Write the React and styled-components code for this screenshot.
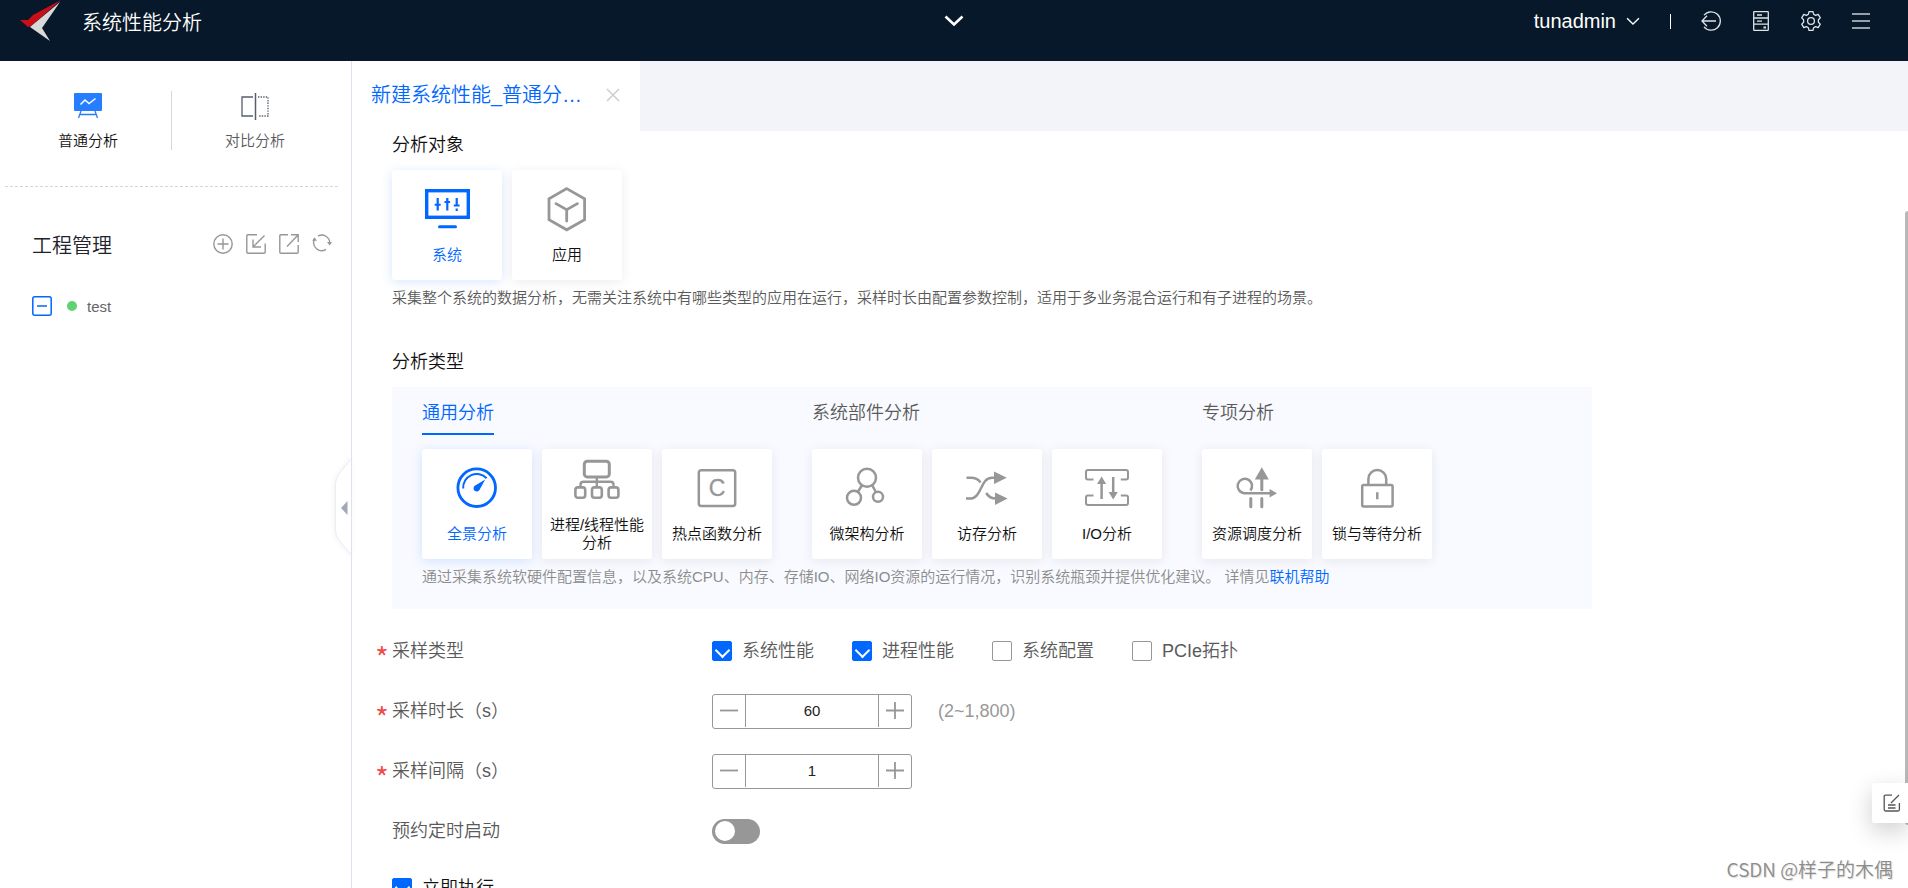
import React, { useState } from 'react'
import styled, { createGlobalStyle } from 'styled-components'

const blue = '#0067ff'
const grey = '#979797'
const fontStack = '"Liberation Sans", "Noto Sans CJK SC", sans-serif'

/* ---------- icons ---------- */

const Logo = () => (
  <svg width="42" height="42" viewBox="0 0 42 42">
    <path d="M41 0 L13 15 L8 20 L0 20 L8 27 L11 26 Z" fill="#cb0f19" />
    <path d="M40 2 L10 27 L30 41 L22 28 Z" fill="#d9d9d9" />
  </svg>
)

const ChevronDown = ({ width, height, stroke }) => (
  <svg width={width} height={height} viewBox="0 0 20 12" fill="none" stroke="#fff" strokeWidth={stroke}>
    <path d="M1.5 1.5 L10 9.5 L18.5 1.5" />
  </svg>
)

const LogoutIcon = () => (
  <svg width="20" height="20" viewBox="0 0 20 20" fill="none" stroke="#dfe3e8" strokeWidth="1.3">
    <path d="M3 4.2 A9.2 9.2 0 1 1 3 15.8" />
    <path d="M6 4.8 L1 10 L6 15.2 M1 10 H15" />
  </svg>
)

const ServerIcon = () => (
  <svg width="20" height="20" viewBox="0 0 20 20" fill="none" stroke="#dfe3e8" strokeWidth="1.3">
    <rect x="2.7" y="0.7" width="14.6" height="18.6" rx="0.6" />
    <path d="M2.7 7 H17.3 M2.7 13.2 H17.3 M6 4 H11 M6 10.2 H11" />
    <path d="M12.5 16.5 H15" strokeWidth="2" />
  </svg>
)

const GearIcon = () => (
  <svg width="20" height="20" viewBox="0 0 20 20" fill="none" stroke="#dfe3e8" strokeWidth="1.3" strokeLinejoin="round">
    <path d="M8 0.7 H12 L12.6 3.2 L14.6 4.4 L17.2 3.4 L19.3 6.9 L17.4 8.8 V11.2 L19.3 13.1 L17.2 16.6 L14.6 15.6 L12.6 16.8 L12 19.3 H8 L7.4 16.8 L5.4 15.6 L2.8 16.6 L0.7 13.1 L2.6 11.2 V8.8 L0.7 6.9 L2.8 3.4 L5.4 4.4 L7.4 3.2 Z" />
    <circle cx="10" cy="10" r="3.4" />
  </svg>
)

const MenuIcon = () => (
  <svg width="20" height="20" viewBox="0 0 20 20" stroke="#c8ccd2" strokeWidth="1.5">
    <path d="M1 3 H19 M1 10 H19 M1 17 H19" />
  </svg>
)

const BoardIcon = () => (
  <svg width="28" height="26" viewBox="0 0 28 26" fill="none">
    <rect x="0" y="0" width="28" height="18" rx="1" fill="#267dff" />
    <path d="M6.5 11.5 L11 7 L15 10.5 L21.5 5.5" stroke="#fff" strokeWidth="1.5" />
    <path d="M7 18 L4.5 25 M21 18 L23.5 25 M6 21.5 H22" stroke="#267dff" strokeWidth="1.3" />
  </svg>
)

const CompareIcon = () => (
  <svg width="28" height="27" viewBox="0 0 28 27" fill="none" stroke="#575d6c" strokeWidth="1.3">
    <path d="M12 4 H1 V23 H12" />
    <path d="M14.5 0 V27" strokeWidth="1.5" />
    <path d="M17 4 H27 V23 H17" strokeDasharray="1.4 1.2" />
  </svg>
)

const AddIcon = () => (
  <svg width="20" height="20" viewBox="0 0 20 20" fill="none" stroke={grey} strokeWidth="1.4">
    <circle cx="10" cy="10" r="9.2" />
    <path d="M10 4.5 V15.5 M4.5 10 H15.5" />
  </svg>
)

const ImportIcon = () => (
  <svg width="20" height="20" viewBox="0 0 20 20" fill="none" stroke={grey} strokeWidth="1.4">
    <path d="M11 0.8 H2 Q0.8 0.8 0.8 2 V18 Q0.8 19.2 2 19.2 H18 Q19.2 19.2 19.2 18 V9.5" />
    <path d="M18.5 1.5 L7 13 M7 5.5 V13 H15" />
  </svg>
)

const ExportIcon = () => (
  <svg width="20" height="20" viewBox="0 0 20 20" fill="none" stroke={grey} strokeWidth="1.4">
    <path d="M9 0.8 H2 Q0.8 0.8 0.8 2 V18 Q0.8 19.2 2 19.2 H18 Q19.2 19.2 19.2 18 V11" />
    <path d="M8 12.5 L19 1 M12 0.8 H19.2 V8" />
  </svg>
)

const RefreshIcon = () => (
  <svg width="20" height="20" viewBox="0 0 20 20" fill="none" stroke={grey} strokeWidth="1.4">
    <path d="M6 2.1 A8 8 0 0 1 17.8 9 M2.3 5.5 A8 8 0 0 0 14 15.3" />
    <path d="M15 8 H20 L17.6 11.6 Z M0.2 6.8 H5 L2.4 3.2 Z" fill={grey} stroke="none" />
  </svg>
)

const CollapseIcon = () => (
  <svg width="20" height="20" viewBox="0 0 20 20" fill="none" stroke={blue} strokeWidth="1.5">
    <rect x="0.8" y="0.8" width="18.4" height="18.4" rx="2" />
    <path d="M5 10 H15" />
  </svg>
)

const CloseIcon = () => (
  <svg width="14" height="14" viewBox="0 0 14 14" stroke="#d0d0d0" strokeWidth="1.7">
    <path d="M1 1 L13 13 M13 1 L1 13" />
  </svg>
)

const NoteIcon = () => (
  <svg width="18" height="18" viewBox="0 0 18 18" fill="none" stroke="#555" strokeWidth="1.3">
    <path d="M9 1.2 H2.5 Q1.2 1.2 1.2 2.5 V15.5 Q1.2 17 2.5 17 H15 Q16.4 17 16.4 15.5 V9" />
    <path d="M8 9 L16 1 M5 11 H12.5 M5 14 H12.5" />
  </svg>
)

const HandleShape = () => (
  <svg width="17" height="100" viewBox="0 0 17 100">
    <path d="M17 1 L4 17 Q0.5 22 0.5 27 V73 Q0.5 78 4 83 L17 99" fill="#fff" stroke="#ececf1" />
    <path d="M12.5 44 V58 L6 51 Z" fill="#a3a8b8" />
    <path d="M16.5 0 V100" stroke="#dfe1ee" />
  </svg>
)

const CardSvg = ({ children }) => (
  <svg width="46" height="46" viewBox="0 0 46 46" fill="none" stroke="currentColor" strokeWidth="2.5">
    {children}
  </svg>
)

const icons = {
  system: (
    <CardSvg>
      <rect x="2.7" y="4.7" width="41.6" height="26.6" strokeWidth="3.4" />
      <path d="M15.5 40.7 H31.5" strokeWidth="3" strokeLinecap="round" />
      <path d="M13.7 12 V24.5 M23.3 12 V24.5 M32.7 12 V20 M32.7 22.5 V25" strokeWidth="2.2" />
      <path d="M10.7 18.7 H16.7 M20.5 16 H26.1 M29.8 19.5 H35.6" strokeWidth="2" />
    </CardSvg>
  ),
  app: (
    <CardSvg>
      <path d="M22.7 2.6 L40.6 12.8 V33.8 L22.7 43.8 L5 33.8 V12.8 Z" strokeWidth="2.8" />
      <path d="M12 17.6 L22.7 23.6 L33.4 17.6 M22.7 23.6 V35" strokeWidth="2.8" strokeLinecap="round" />
    </CardSvg>
  ),
  gauge: (
    <CardSvg>
      <circle cx="22.7" cy="22.7" r="18.8" strokeWidth="2.8" />
      <path d="M9.2 23.5 A13.6 13.6 0 0 1 32.6 13.2" strokeWidth="2" />
      <path d="M31.2 14.6 L25.6 24.8 A3.2 3.2 0 1 1 20.8 20.8 Z" fill="currentColor" stroke="none" />
    </CardSvg>
  ),
  process: (
    <CardSvg>
      <rect x="10.3" y="5.3" width="25" height="15.6" rx="3" strokeWidth="3" />
      <path d="M22.8 21 V30 M6.5 31 V28.5 Q6.5 25.8 9.5 25.8 H36.5 Q39.5 25.8 39.5 28.5 V31" strokeWidth="2.4" />
      <rect x="1.4" y="31.4" width="9.8" height="10.4" rx="2.5" strokeWidth="2.6" />
      <rect x="18" y="31.4" width="9.8" height="10.4" rx="2.5" strokeWidth="2.6" />
      <rect x="34.6" y="31.4" width="9.8" height="10.4" rx="2.5" strokeWidth="2.6" />
    </CardSvg>
  ),
  hotspot: (
    <CardSvg>
      <rect x="4.8" y="5.2" width="36.4" height="35.8" rx="2.5" />
      <text x="23" y="31" textAnchor="middle" fontFamily="Liberation Sans" fontSize="23" fill="currentColor" strokeWidth="0.3">C</text>
    </CardSvg>
  ),
  micro: (
    <CardSvg>
      <circle cx="23" cy="12.8" r="9" />
      <circle cx="10" cy="32.8" r="7" />
      <circle cx="34" cy="31.8" r="5" />
      <path d="M17.8 20.5 L13.8 27 M28.4 20.5 L31.8 27" />
    </CardSvg>
  ),
  memory: (
    <CardSvg>
      <path d="M2 33.6 H6 C18 33.6 16 12.8 28 12.8 H31" />
      <path d="M2.5 12.8 H7 Q13 12.8 16.6 17.4 M22.2 28 Q25.5 33.6 32 33.6" />
      <path d="M30 6.6 L42.8 12.8 L30 19 Z M31 27.4 L43.6 33.6 L31 40 Z" fill="currentColor" stroke="none" />
    </CardSvg>
  ),
  io: (
    <CardSvg>
      <path d="M9.5 14.4 H4 Q2 14.4 2 12.5 V7 Q2 5 4 5 H42 Q44 5 44 7 V12.5 Q44 14.4 42 14.4 H36.8" strokeWidth="2" />
      <path d="M9.5 30.4 H4 Q2 30.4 2 32.3 V38 Q2 40 4 40 H42 Q44 40 44 38 V32.3 Q44 30.4 42 30.4 H36.8" strokeWidth="2" />
      <path d="M17.6 17 V34 M29.2 12 V29" />
      <path d="M13 19 L17.6 11.4 L22.2 19 Z M24.6 27 L29.2 34.4 L33.8 27 Z" fill="currentColor" stroke="none" />
    </CardSvg>
  ),
  schedule: (
    <CardSvg>
      <path d="M16.4 25.6 A7.2 7.2 0 1 0 10.2 28.2 H36" />
      <path d="M27.8 13 V24.8 M27.8 33.5 V41.7 M16.8 33.5 V41.7" strokeWidth="3" strokeLinecap="round" />
      <path d="M20.8 14.4 L27.8 2.2 L34.8 14.4 Z M35.6 24 L43 28.2 L35.6 32.4 Z" fill="currentColor" stroke="none" />
    </CardSvg>
  ),
  lock: (
    <CardSvg>
      <rect x="8.2" y="19.9" width="30.4" height="21.6" rx="1.5" />
      <path d="M14.4 19.5 V14 A8.9 8.9 0 0 1 32.2 14 V19.5 M23.3 27.2 V34.2" />
    </CardSvg>
  )
}

/* ---------- data ---------- */

const targets = [
  { id: 'system', label: '系统' },
  { id: 'app', label: '应用' }
]

const groups = [
  {
    title: '通用分析',
    items: [
      { id: 'gauge', label: '全景分析' },
      { id: 'process', label: '进程/线程性能分析' },
      { id: 'hotspot', label: '热点函数分析' }
    ]
  },
  {
    title: '系统部件分析',
    items: [
      { id: 'micro', label: '微架构分析' },
      { id: 'memory', label: '访存分析' },
      { id: 'io', label: 'I/O分析' }
    ]
  },
  {
    title: '专项分析',
    items: [
      { id: 'schedule', label: '资源调度分析' },
      { id: 'lock', label: '锁与等待分析' }
    ]
  }
]

const sampleTypes = [
  { label: '系统性能', on: true },
  { label: '进程性能', on: true },
  { label: '系统配置', on: false },
  { label: 'PCIe拓扑', on: false }
]

/* ---------- parts ---------- */

const CardList = ({ items, active, onPick }) => (
  <Cards>
    {items.map(item => (
      <Card key={item.id} type="button" $active={item.id === active} aria-pressed={item.id === active} onClick={() => onPick(item.id)}>
        <CardIcon>{icons[item.id]}</CardIcon>
        {item.label}
      </Card>
    ))}
  </Cards>
)

const NumberField = ({ id, initial }) => {
  const [value, setValue] = useState(initial)

  return (
    <Stepper>
      <StepButton type="button" aria-label="减少" onClick={() => setValue(Number(value) - 1)}>
        <svg width="18" height="18" viewBox="0 0 18 18" stroke={grey} strokeWidth="1.8"><path d="M0 8.5 H18" /></svg>
      </StepButton>
      <StepInput id={id} value={value} onChange={e => setValue(e.target.value)} />
      <StepButton type="button" aria-label="增加" onClick={() => setValue(Number(value) + 1)}>
        <svg width="18" height="18" viewBox="0 0 18 18" stroke={grey} strokeWidth="1.8"><path d="M0 8.5 H18 M9 0 V17" /></svg>
      </StepButton>
    </Stepper>
  )
}

const App = () => {
  const [target, setTarget] = useState('system')
  const [type, setType] = useState('gauge')

  return (
    <Page>
      <GlobalStyle />
      <Header>
        <Brand>
          <Logo />
          <BrandTitle>系统性能分析</BrandTitle>
        </Brand>
        <IconButton aria-label="展开"><ChevronDown width={20} height={12} stroke={2.6} /></IconButton>
        <HeaderTools>
          <UserButton type="button">tunadmin <ChevronDown width={14} height={9} stroke={2} /></UserButton>
          <HeaderDivider />
          <IconButton aria-label="退出"><LogoutIcon /></IconButton>
          <IconButton aria-label="服务器"><ServerIcon /></IconButton>
          <IconButton aria-label="设置"><GearIcon /></IconButton>
          <IconButton aria-label="菜单"><MenuIcon /></IconButton>
        </HeaderTools>
      </Header>

      <Body>
        <Sidebar>
          <Modes>
            <Mode type="button" $active><ModeIcon><BoardIcon /></ModeIcon>普通分析</Mode>
            <ModeDivider />
            <Mode type="button"><ModeIcon><CompareIcon /></ModeIcon>对比分析</Mode>
          </Modes>
          <ProjectHead>
            <ProjectTitle>工程管理</ProjectTitle>
            <ProjectTools>
              <IconButton aria-label="新建"><AddIcon /></IconButton>
              <IconButton aria-label="导入"><ImportIcon /></IconButton>
              <IconButton aria-label="导出"><ExportIcon /></IconButton>
              <IconButton aria-label="刷新"><RefreshIcon /></IconButton>
            </ProjectTools>
          </ProjectHead>
          <Project>
            <IconButton aria-label="收起工程"><CollapseIcon /></IconButton>
            <StatusDot />
            test
          </Project>
          <Handle type="button" aria-label="收起侧栏"><HandleShape /></Handle>
        </Sidebar>

        <Main>
          <TabBar>
            <Tab>
              <TabName>新建系统性能_普通分…</TabName>
              <IconButton aria-label="关闭"><CloseIcon /></IconButton>
            </Tab>
          </TabBar>

          <Content>
            <SectionTitle>分析对象</SectionTitle>
            <CardList items={targets} active={target} onPick={setTarget} />
            <Hint>采集整个系统的数据分析，无需关注系统中有哪些类型的应用在运行，采样时长由配置参数控制，适用于多业务混合运行和有子进程的场景。</Hint>

            <SectionTitle $spaced>分析类型</SectionTitle>
            <TypePanel>
              <Groups>
                {groups.map((group, i) => (
                  <div key={group.title}>
                    <GroupTitle $active={i === 0}>{group.title}</GroupTitle>
                    <CardList items={group.items} active={type} onPick={setType} />
                  </div>
                ))}
              </Groups>
              <Hint $light>
                通过采集系统软硬件配置信息，以及系统CPU、内存、存储IO、网络IO资源的运行情况，识别系统瓶颈并提供优化建议。 详情见<HelpLink href="#help">联机帮助</HelpLink>
              </Hint>
            </TypePanel>

            <Form>
              <Row>
                <RowLabel as="span" $required>采样类型</RowLabel>
                {sampleTypes.map(item => (
                  <CheckLabel key={item.label}>
                    <Checkbox type="checkbox" defaultChecked={item.on} />
                    {item.label}
                  </CheckLabel>
                ))}
              </Row>
              <Row>
                <RowLabel htmlFor="duration" $required>采样时长（s）</RowLabel>
                <NumberField id="duration" initial="60" />
                <Range>(2~1,800)</Range>
              </Row>
              <Row>
                <RowLabel htmlFor="interval" $required>采样间隔（s）</RowLabel>
                <NumberField id="interval" initial="1" />
              </Row>
              <Row>
                <RowLabel htmlFor="schedule">预约定时启动</RowLabel>
                <Switch id="schedule" type="checkbox" role="switch" />
              </Row>
              <Row $last>
                <CheckLabel $dark>
                  <Checkbox type="checkbox" defaultChecked />
                  立即执行
                </CheckLabel>
              </Row>
            </Form>
          </Content>
          <ScrollThumb />
        </Main>
      </Body>

      <NoteButton type="button" aria-label="反馈"><NoteIcon /></NoteButton>
      <Watermark>CSDN @样子的木偶</Watermark>
    </Page>
  )
}

/* ---------- styles ---------- */

const GlobalStyle = createGlobalStyle`
  * {
    box-sizing: border-box;
  }
  body {
    margin: 0;
    background: #fff;
    color: #111;
    font-family: ${fontStack};
    font-size: 15px;
    font-weight: 350;
  }
  button, input {
    font: inherit;
    color: inherit;
  }
  button {
    padding: 0;
    border: 0;
    background: none;
    cursor: pointer;
  }
  svg {
    display: block;
    flex: none;
  }
`

const Page = styled.div`
  position: relative;
  display: flex;
  flex-direction: column;
  height: 100vh;
  overflow: hidden;
`

const Header = styled.header`
  flex: none;
  display: grid;
  grid-template-columns: 1fr auto 1fr;
  align-items: center;
  padding: 0 20px 19px;
  height: 61px;
  background: #061829;
  color: #fff;
`

const Brand = styled.div`
  display: flex;
  align-items: center;
  gap: 20px;
`

const BrandTitle = styled.h1`
  margin: 4px 0 0;
  font-size: 20px;
  font-weight: inherit;
  line-height: 38px;
`

const HeaderTools = styled.div`
  display: flex;
  align-items: center;
  justify-content: flex-end;
  gap: 30px;
  padding-right: 17px;
`

const UserButton = styled.button`
  display: flex;
  align-items: center;
  gap: 10px;
  font-size: 20px;
`

const HeaderDivider = styled.span`
  width: 1px;
  height: 15px;
  background: #fff;
`

const IconButton = styled.button.attrs({ type: 'button' })`
  flex: none;
  display: flex;
`

const Body = styled.div`
  flex: 1;
  min-height: 0;
  display: grid;
  grid-template-columns: 352px minmax(0, 1fr);
`

const Sidebar = styled.aside`
  position: relative;
  padding: 0 13px 0 5px;
  border-right: 1px solid #dfe1ee;
`

const Modes = styled.div`
  display: grid;
  grid-template-columns: 1fr 1px 1fr;
  padding: 30px 0 36px;
  border-bottom: 1px dashed #d3d5df;
`

const Mode = styled.button`
  display: flex;
  flex-direction: column;
  align-items: center;
  justify-content: space-between;
  color: ${p => (p.$active ? '#111' : '#5a5a5a')};
  line-height: 18px;
`

const ModeIcon = styled.span`
  display: flex;
  align-items: center;
  height: 30px;
`

const ModeDivider = styled.span`
  height: 59px;
  background: #d3d5df;
`

const ProjectHead = styled.div`
  display: flex;
  align-items: center;
  justify-content: space-between;
  height: 30px;
  margin-top: 42px;
  padding: 0 6px 0 27px;
`

const ProjectTitle = styled.h2`
  margin: 0;
  color: #20232b;
  font-size: 20px;
  font-weight: inherit;
`

const ProjectTools = styled.div`
  display: flex;
  gap: 13px;
`

const Project = styled.div`
  display: flex;
  align-items: center;
  height: 30px;
  margin-top: 32px;
  padding-left: 27px;
  color: #666;
`

const StatusDot = styled.span`
  width: 10px;
  height: 10px;
  margin: 0 10px 0 15px;
  border-radius: 50%;
  background: #5fd373;
`

const Handle = styled.button`
  position: absolute;
  top: 396px;
  right: -1px;
  filter: drop-shadow(-1px 0 2px rgba(0, 0, 0, 0.05));
`

const Main = styled.main`
  position: relative;
  min-width: 0;
  overflow: hidden;
`

const TabBar = styled.div`
  display: flex;
  height: 70px;
  background: #f3f4f9;
`

const Tab = styled.div`
  display: flex;
  align-items: center;
  justify-content: space-between;
  width: 288px;
  padding: 0 20px 2px 19px;
  background: #fff;
`

const TabName = styled.span`
  color: ${blue};
  font-size: 20px;
  line-height: 30px;
  white-space: nowrap;
`

const Content = styled.div`
  padding: 0 40px;
`

const SectionTitle = styled.h3`
  margin: ${p => (p.$spaced ? '40px' : '0')} 0 11px;
  font-size: 18px;
  font-weight: inherit;
  line-height: 28px;
`

const Cards = styled.div`
  display: flex;
  gap: 10px;
`

const Card = styled.button`
  display: flex;
  flex-direction: column;
  align-items: center;
  justify-content: center;
  width: 110px;
  height: 110px;
  padding: 0 5px;
  border-radius: 3px;
  background: #fff;
  box-shadow: 0 2px 12px ${p => (p.$active ? 'rgba(0, 103, 255, 0.16)' : 'rgba(0, 0, 0, 0.08)')};
  color: ${p => (p.$active ? blue : '#111')};
  line-height: 18px;

  svg {
    color: ${p => (p.$active ? blue : grey)};
  }
`

const CardIcon = styled.span`
  margin-bottom: 14px;
`

const Hint = styled.p`
  margin: 8px 0 0;
  color: ${p => (p.$light ? '#8c8c8c' : '#5a5a5a')};
  line-height: 20px;
`

const HelpLink = styled.a`
  color: ${blue};
  text-decoration: none;
`

const TypePanel = styled.section`
  max-width: 1200px;
  padding: 12px 30px 22px;
  background: #f8faff;
`

const Groups = styled.div`
  display: flex;
  gap: 40px;
`

const GroupTitle = styled.h4`
  width: fit-content;
  margin: 0 0 14px;
  padding-bottom: 6px;
  border-bottom: 2px solid ${p => (p.$active ? blue : 'transparent')};
  color: ${p => (p.$active ? blue : '#5a5a5a')};
  font-size: 18px;
  font-weight: inherit;
  line-height: 28px;
`

const Form = styled.form`
  margin-top: 12px;
  font-size: 18px;
`

const Row = styled.div`
  display: flex;
  align-items: center;
  height: ${p => (p.$last ? '54px' : '60px')};
`

const RowLabel = styled.label`
  position: relative;
  width: 320px;
  color: #5a5a5a;
  line-height: 26px;

  &::before {
    content: ${p => (p.$required ? '"*"' : 'none')};
    position: absolute;
    left: -17px;
    top: 6px;
    color: #f04a4a;
    font-family: "Noto Sans CJK SC", sans-serif;
    font-size: 30px;
  }
`

const CheckLabel = styled.label`
  display: flex;
  align-items: center;
  gap: 10px;
  width: 140px;
  color: ${p => (p.$dark ? '#111' : '#5a5a5a')};
  line-height: 24px;
  white-space: nowrap;
`

const Checkbox = styled.input`
  appearance: none;
  display: flex;
  justify-content: center;
  width: 20px;
  height: 20px;
  margin: 0;
  padding-top: 3px;
  border: 1px solid ${grey};
  border-radius: 2px;
  background: #fff;

  &:checked {
    border-color: ${blue};
    background: ${blue};
  }

  &:checked::after {
    content: '';
    flex: none;
    align-self: flex-start;
    width: 9px;
    height: 9px;
    border: solid #fff;
    border-width: 0 2px 2px 0;
    transform: rotate(45deg);
  }
`

const Stepper = styled.div`
  display: flex;
  width: 200px;
  height: 35px;
  padding-bottom: 1px;
  border: 1px solid ${grey};
  border-radius: 3px;
`

const StepButton = styled.button`
  display: flex;
  align-items: center;
  justify-content: center;
  width: 32px;
`

const StepInput = styled.input`
  flex: 1;
  min-width: 0;
  border: solid ${grey};
  border-width: 0 1px;
  outline: none;
  color: #222;
  font-size: 15px;
  text-align: center;
`

const Range = styled.span`
  margin-left: 26px;
  color: #999;
`

const Switch = styled.input`
  appearance: none;
  width: 48px;
  height: 25px;
  margin: 0;
  padding: 2px 3px;
  border-radius: 13px;
  background: ${grey};

  &::before {
    content: '';
    display: block;
    width: 20px;
    height: 20px;
    border-radius: 50%;
    background: #fff;
  }

  &:checked {
    padding-left: 25px;
    background: ${blue};
  }
`

const ScrollThumb = styled.div`
  position: absolute;
  top: 150px;
  right: 0;
  width: 3px;
  height: 614px;
  border-radius: 3px 0 0 3px;
  background: #b8b8b8;
`

const NoteButton = styled.button`
  position: absolute;
  right: 0;
  bottom: 65px;
  display: flex;
  align-items: center;
  width: 36px;
  height: 40px;
  padding-left: 11px;
  border-radius: 2px 0 0 2px;
  background: #fff;
  box-shadow: 0 8px 24px rgba(0, 0, 0, 0.2);
`

const Watermark = styled.div`
  position: absolute;
  right: 15px;
  bottom: 5px;
  color: #8c8c8c;
  font-family: "Noto Sans CJK SC", sans-serif;
  font-size: 19px;
  line-height: 28px;
  text-shadow: 1px 1px 1px #ddd;
`

export default App
